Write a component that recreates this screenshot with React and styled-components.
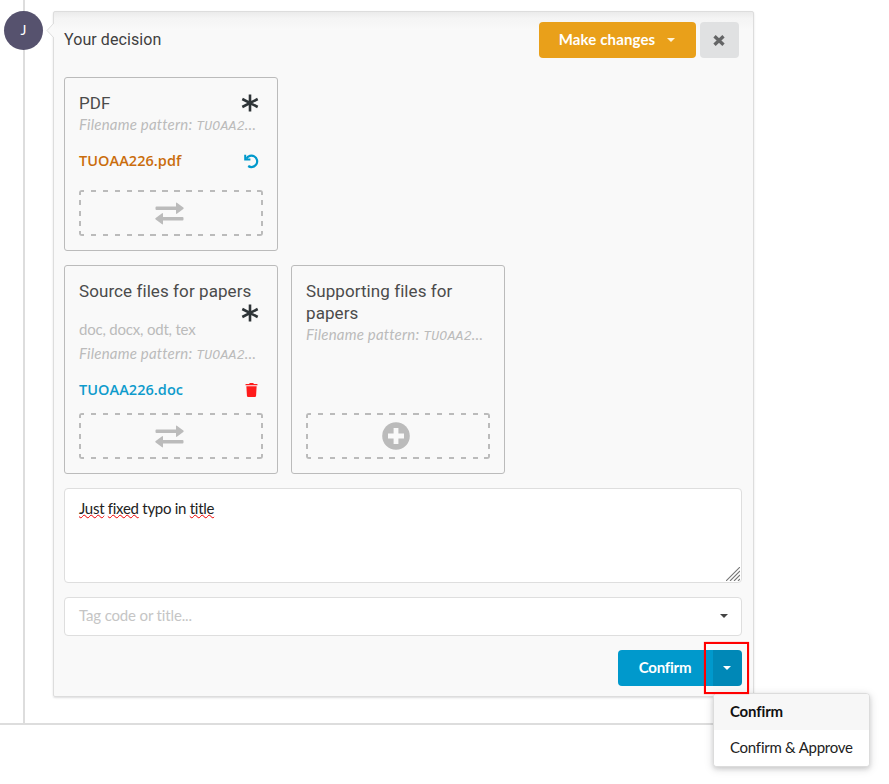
import React from 'react';
import styled, { createGlobalStyle, css } from 'styled-components';

const GlobalStyle = createGlobalStyle`
  *, *::before, *::after { box-sizing: border-box; }
  body { margin: 0; background: #fff; overflow: hidden; }
`;

const Page = styled.main`
  width: 889px;
  height: 784px;
  font: 400 15px/20px Lato, "Open Sans", sans-serif;
  color: #222;
`;

const Timeline = styled.div`
  display: flex;
  width: 754px;
  height: 725px;
  padding-top: 11px;
  border-bottom: 2px solid #ddd;
`;

const Rail = styled.div`
  width: 53px;
  margin-top: -11px;
  padding: 11px 0 0 4px;
  background: linear-gradient(#ddd, #ddd) 23px 0 / 2px 100% no-repeat;
`;

const Avatar = styled.div`
  width: 39px;
  height: 39px;
  border-radius: 50%;
  background: #56526e;
  color: #fff;
  font-size: 14px;
  line-height: 38px;
  text-align: center;
`;

const Panel = styled.section`
  position: relative;
  display: flex;
  flex-direction: column;
  width: 701px;
  height: 686px;
  padding: 10px 11px 0 10px;
  border: 1px solid #ddd;
  border-radius: 2px;
  background: linear-gradient(#ebebeb, #f4f4f4 6px, #f9f9f9 18px);
  box-shadow: 0 1px 2px rgba(34, 36, 38, 0.15);
`;

const Pointer = styled.svg`
  position: absolute;
  left: -8px;
  top: 10px;
`;

const Header = styled.header`
  display: flex;
  align-items: center;
  gap: 4px;
  height: 36px;
  padding-right: 3px;
  margin-bottom: 19px;
`;

const Heading = styled.h2`
  flex: 1;
  margin: 0;
  color: #3f3f3f;
  font: 400 16px/20px Roboto, sans-serif;
  letter-spacing: 0.08px;
`;

const Button = styled.button`
  display: flex;
  align-items: center;
  justify-content: center;
  gap: 12px;
  width: ${p => p.$width}px;
  height: 36px;
  padding: 0 1px 2px 0;
  border: 0;
  border-radius: ${p => p.$radius || '4px'};
  background: ${p => p.$color};
  color: #fff;
  font: 700 15px/20px Lato, sans-serif;
  letter-spacing: ${p => p.$spacing || '0'};
  svg { margin-top: 2px; }
`;

const CardRow = styled.div`
  display: flex;
  gap: 13px;
  margin-bottom: 14px;
`;

const Card = styled.article`
  display: flex;
  flex-direction: column;
  width: 214px;
  height: ${p => p.$height}px;
  padding: 14px;
  border: 1px solid #bbb;
  border-radius: 3px;
`;

const CardTitle = styled.div`
  display: flex;
  flex-wrap: wrap;
  justify-content: space-between;
  color: #4b4b4b;
  font: 400 17px/22px Roboto, sans-serif;
  letter-spacing: 0.08px;
  svg { margin: 0 4px -6px auto; }
`;

const Hint = styled.div`
  height: ${p => p.$height || 22}px;
  color: #bbb;
  line-height: ${p => (p.$height || 22) - 2}px;
  letter-spacing: ${p => p.$spacing || '0'};
  white-space: nowrap;
  font-style: ${p => (p.$italic ? 'italic' : 'normal')};
`;

const Pattern = styled.span`
  font: italic 13px/20px "Liberation Mono", monospace;
  letter-spacing: 0.3px;
`;

const FileRow = styled.div`
  display: flex;
  align-items: center;
  justify-content: space-between;
  height: 20px;
  margin-top: ${p => p.$top}px;
  padding-right: ${p => p.$right}px;
  color: ${p => p.$color};
  font: 600 14.500px/20px "Open Sans", sans-serif;
  letter-spacing: 0.05px;
`;

const dashes = (angle, dash, period) =>
  `repeating-linear-gradient(${angle}, #bbb 0 ${dash}px, transparent ${dash}px ${period}px)`;

const DropZone = styled.div`
  display: flex;
  flex: none;
  align-items: center;
  justify-content: center;
  height: 46px;
  margin-top: auto;
  padding-right: 4px;
  border-radius: 3px;
  background:
    ${dashes('90deg', 5.5, 11.9)} top / 100% 2px no-repeat,
    ${dashes('90deg', 5.5, 11.9)} bottom / 100% 2px no-repeat,
    ${dashes('180deg', 5, 10.25)} left / 2px 100% no-repeat,
    ${dashes('180deg', 5, 10.25)} right / 2px 100% no-repeat;
`;

const fieldBox = css`
  border: 1px solid #dedede;
  border-radius: 4px;
  background: #fff;
`;

const Comment = styled.div`
  ${fieldBox}
  display: flex;
  justify-content: space-between;
  height: 95px;
  padding: 9px 0 0 14px;
  margin-bottom: 14px;
  letter-spacing: -0.28px;
  svg { align-self: flex-end; margin: 0 1px 1px; }
`;

const Misspelled = styled.span`
  text-decoration: underline wavy #e00 1.3px;
  text-decoration-skip-ink: none;
  text-underline-offset: 0;
`;

const Select = styled.div`
  ${fieldBox}
  display: flex;
  align-items: center;
  justify-content: space-between;
  height: 39px;
  padding: 0 13px 3px 14px;
  margin-bottom: 14px;
  color: #c5c5c5;
  letter-spacing: -0.15px;
  svg { margin-top: 2px; }
`;

const Actions = styled.div`
  display: flex;
  justify-content: flex-end;
`;

const Split = styled.div`
  position: relative;
  display: flex;
`;

const Highlight = styled.div`
  position: absolute;
  left: 86px;
  top: -8px;
  width: 45px;
  height: 52px;
  border: 2px solid #f00;
  box-shadow: 0 0 1px rgba(255, 0, 0, 0.6);
  z-index: 2;
`;

const Menu = styled.div`
  position: absolute;
  left: 95px;
  top: 43px;
  width: 157px;
  height: 74px;
  overflow: hidden;
  border: 1px solid #dcdcdc;
  border-radius: 4px;
  background: #fff;
  box-shadow: 0 2px 4px rgba(34, 36, 38, 0.14), 0 2px 10px rgba(34, 36, 38, 0.15);
`;

const MenuItem = styled.div`
  height: 36px;
  padding: 7px 16px 9px;
  background: ${p => (p.$active ? '#f7f7f7' : '#fff')};
  color: ${p => (p.$active ? '#111' : '#222')};
  font-weight: ${p => (p.$active ? 700 : 400)};
  letter-spacing: ${p => (p.$active ? '-0.15px' : '-0.25px')};
  white-space: nowrap;
`;

const Caret = ({ color = '#fff' }) => (
  <svg width="8" height="4" viewBox="0 0 8 4"><path d="M0 0h8L4 4z" fill={color} /></svg>
);

const Asterisk = () => (
  <svg width="18" height="22" viewBox="0 0 18 22" stroke="#2f3538" strokeWidth="2.6">
    <path d="M9 2.500v17M1.300 7l15.400 8M1.300 15l15.400-8" />
  </svg>
);

const Swap = () => (
  <svg width="29" height="23" viewBox="0 0 29 23" fill="#bbb">
    <path d="M1.500 4.500H21V1.400q0-1.600 1.200-.5l6.100 4.600q.8.700 0 1.400l-6.100 4.700q-1.200 1-1.200-.7V8H1.500Q.5 8 .5 7V5.500q0-1 1-1z" />
    <path d="M27.500 15H8v-3.100q0-1.600-1.200-.5L.7 16q-.8.700 0 1.400l6.100 4.700q1.200 1 1.200-.7v-2.900h19.500q1 0 1-1V16q0-1-1-1z" />
  </svg>
);

const Undo = () => (
  <svg width="15" height="15" viewBox="0 0 15 15" fill="none" stroke="#09c" strokeWidth="2.200">
    <path d="M2.400 4.700A5.700 5.700 0 1 1 4.200 12" />
    <path d="M1.200.8v4.600h5.200" strokeWidth="2" />
  </svg>
);

const Trash = () => (
  <svg width="13" height="14" viewBox="0 0 13 15" fill="#ff1c1c">
    <path d="M0 1.700Q0 1 .7 1H4l.6-.9h3.800L9 1h3.300q.7 0 .7.700v.7H0zM1 3.400h11l-.6 10.200q-.1 1.300-1.300 1.300H2.900q-1.200 0-1.300-1.300z" />
  </svg>
);

const PlusCircle = () => (
  <svg width="28" height="28" viewBox="0 0 28 28">
    <circle cx="14" cy="14" r="13.800" fill="#bbb" />
    <path d="M14 6v16M6 14h16" stroke="#f9f9f9" strokeWidth="4.800" />
  </svg>
);

const Close = () => (
  <svg width="12" height="11" viewBox="0 0 12 11">
    <path d="M1.500 1.200l9 8.600M10.500 1.200l-9 8.600" stroke="#646566" strokeWidth="3.300" />
  </svg>
);

const ResizeGrip = () => (
  <svg width="14" height="14" viewBox="0 0 14 14" stroke="#777" strokeWidth="1.100">
    <path d="M0 14L14 0M4 14L14 4M8 14l6-6M12 14l2-2" />
  </svg>
);

const FilenamePattern = () => (
  <Hint $italic $spacing="0.2px">Filename pattern: <Pattern>TUOAA2</Pattern>…</Hint>
);

export default function App() {
  return (
    <Page>
      <GlobalStyle />
      <Timeline>
        <Rail><Avatar>J</Avatar></Rail>
        <Panel>
          <Pointer width="8" height="18" viewBox="0 0 8 18">
            <path d="M8 1L1 8.500 8 16" fill="#f9f9f9" stroke="#ddd" />
          </Pointer>
          <Header>
            <Heading>Your decision</Heading>
            <Button $width={157} $color="#e9a01a" $spacing="0.12px">Make changes <Caret color="#fff3d8" /></Button>
            <Button $width={39} $color="#e0e1e2" aria-label="Cancel"><Close /></Button>
          </Header>
          <CardRow>
            <Card $height={174}>
              <CardTitle>PDF <Asterisk /></CardTitle>
              <FilenamePattern />
              <FileRow $top={15} $right={4} $color="#ca6d0c">TUOAA226.pdf <Undo /></FileRow>
              <DropZone><Swap /></DropZone>
            </Card>
          </CardRow>
          <CardRow>
            <Card $height={209}>
              <CardTitle>Source files for papers <Asterisk /></CardTitle>
              <Hint $height={25} $spacing="-0.2px">doc, docx, odt, tex</Hint>
              <FilenamePattern />
              <FileRow $top={15} $right={5} $color="#0e9bcc">TUOAA226.doc <Trash /></FileRow>
              <DropZone><Swap /></DropZone>
            </Card>
            <Card $height={209}>
              <CardTitle>Supporting files for papers</CardTitle>
              <FilenamePattern />
              <DropZone><PlusCircle /></DropZone>
            </Card>
          </CardRow>
          <Comment>
            <span><Misspelled>Just</Misspelled> <Misspelled>fixed</Misspelled> typo in <Misspelled>title</Misspelled></span>
            <ResizeGrip />
          </Comment>
          <Select>Tag code or title... <Caret color="#444" /></Select>
          <Actions>
            <Split>
              <Button $width={95} $color="#09c" $radius="4px 0 0 4px" $spacing="-0.2px">Confirm</Button>
              <Button $width={29} $color="#0088b7" $radius="0 4px 4px 0" aria-label="More actions"><Caret /></Button>
              <Menu>
                <MenuItem $active>Confirm</MenuItem>
                <MenuItem>Confirm &amp; Approve</MenuItem>
              </Menu>
              <Highlight />
            </Split>
          </Actions>
        </Panel>
      </Timeline>
    </Page>
  );
}
